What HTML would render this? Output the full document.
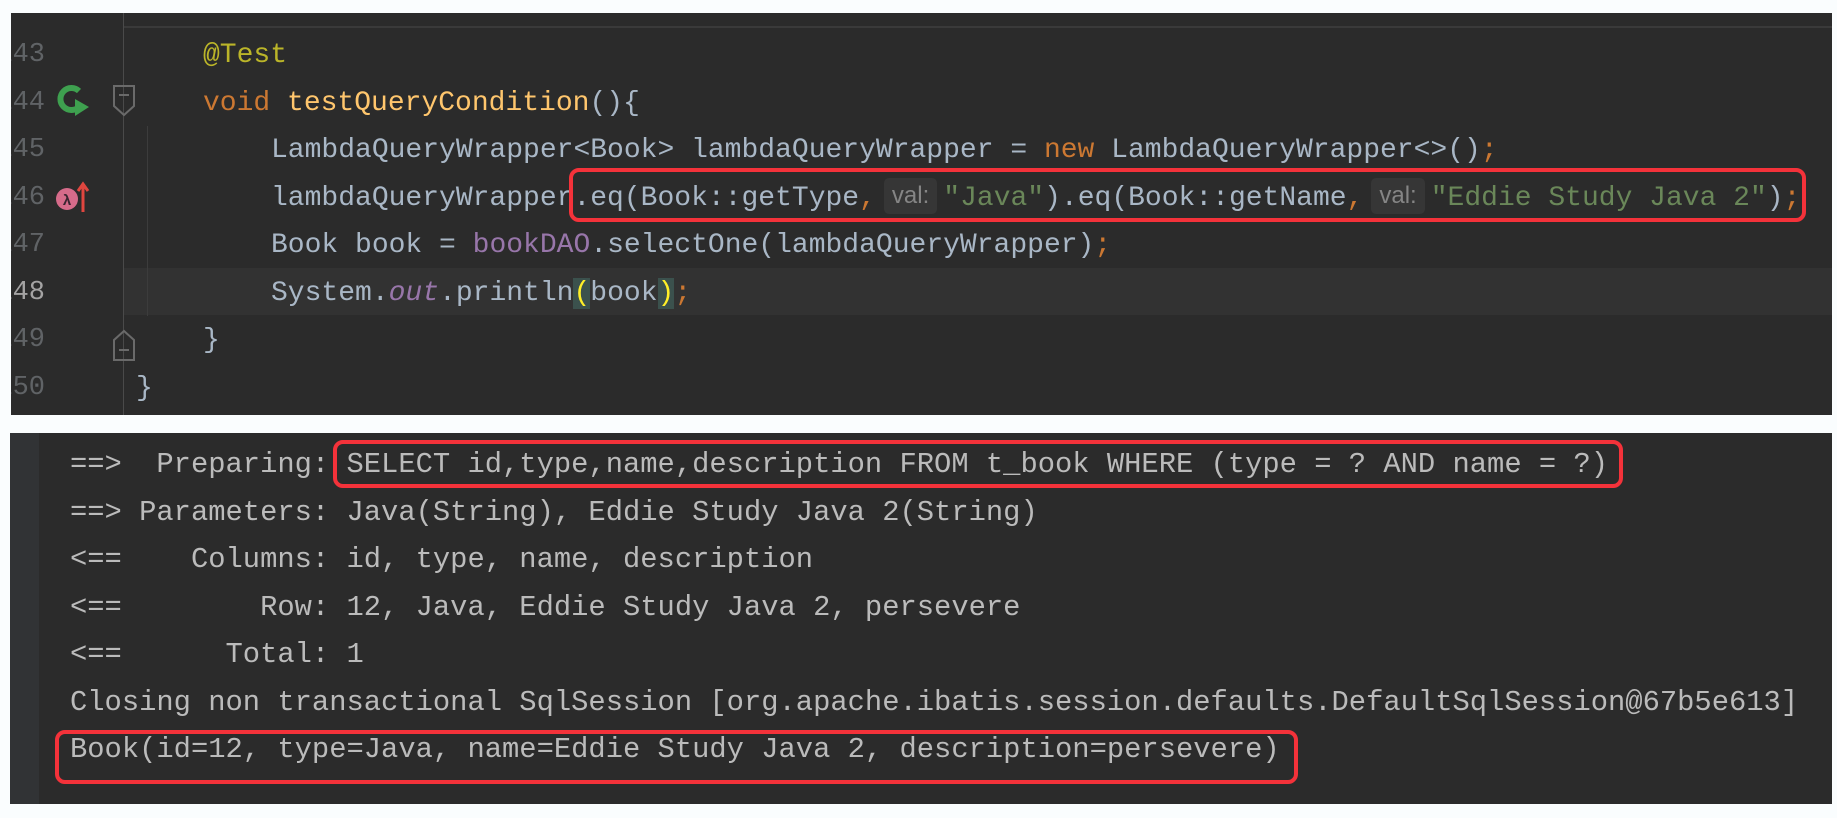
<!DOCTYPE html>
<html><head><meta charset="utf-8"><style>
body{margin:0;width:1837px;height:818px;background:#fafdfe;position:relative;overflow:hidden;font-family:"Liberation Mono",monospace}
.panel{position:absolute;background:#2b2b2b;overflow:hidden}
.ln{position:absolute;left:-26px;width:60px;text-align:right;color:#606366;font-size:27px;line-height:47.5px}
.code{position:absolute;left:0;white-space:pre;font-size:28px;line-height:47.5px;color:#a9b7c6}
.k{color:#cc7832}.m{color:#ffc66d}.a{color:#bbb529}.s{color:#6a8759}.f{color:#9876aa;font-style:italic}.p{color:#9876aa}
.hint{display:inline-block;font-family:"Liberation Sans",sans-serif;font-size:24px;color:#858585;background:#363636;border-radius:5px;padding:0 8px;line-height:36px;margin:0 6px 0 8px;vertical-align:2px}
.br{background:#3b514d;color:#ffef28}
.box{position:absolute;border:4px solid #f4323a;border-radius:10px;box-sizing:border-box}
.con{position:absolute;left:60px;white-space:pre;font-size:28.8px;line-height:47.5px;color:#bbbbbb}
</style></head><body>
<div class="panel" style="left:11px;top:13px;width:1821px;height:402px">
  <div style="position:absolute;left:112px;top:13px;right:0;height:2px;background:#3a3a3a"></div>
  <div style="position:absolute;left:112px;top:0;width:1px;height:402px;background:#4a4a4a"></div>
  <div style="position:absolute;left:113px;top:255px;right:0;height:47px;background:#323232"></div>
  <div style="position:absolute;left:136px;top:113px;width:1px;height:190px;background:#3c3c3c"></div>
  <div class="ln" style="top:19px">143</div>
  <div class="ln" style="top:66.5px">144</div>
  <div class="ln" style="top:114px">145</div>
  <div class="ln" style="top:161.5px">146</div>
  <div class="ln" style="top:209px">147</div>
  <div class="ln" style="top:256.5px;color:#a4a3a3">148</div>
  <div class="ln" style="top:304px">149</div>
  <div class="ln" style="top:351.5px">150</div>
  <svg style="position:absolute;left:46px;top:72px" width="34" height="32" viewBox="0 0 34 32">
    <path d="M22 6 A11 11 0 1 0 22 22" fill="none" stroke="#3ea04f" stroke-width="6"/>
    <path d="M8 14 l5 5 l9 -10" fill="none" stroke="#2b2b2b" stroke-width="3"/>
    <path d="M18 14 L32 22 L18 31 Z" fill="#3ea04f"/>
  </svg>
  <svg style="position:absolute;left:100px;top:71px" width="26" height="36" viewBox="0 0 26 36">
    <path d="M3 2 H23 V22 L13 31 L3 22 Z" fill="none" stroke="#6a6a6a" stroke-width="2"/>
    <path d="M8 11 H18" stroke="#6a6a6a" stroke-width="2"/>
  </svg>
  <svg style="position:absolute;left:100px;top:313px" width="26" height="36" viewBox="0 0 26 36">
    <path d="M3 34 H23 V14 L13 5 L3 14 Z" fill="none" stroke="#6a6a6a" stroke-width="2"/>
    <path d="M8 24 H18" stroke="#6a6a6a" stroke-width="2"/>
  </svg>
  <svg style="position:absolute;left:44px;top:168px" width="36" height="32" viewBox="0 0 36 32">
    <circle cx="12" cy="18" r="11" fill="#d66b8a"/>
    <text x="12" y="24" font-size="15" font-family="Liberation Sans" font-weight="bold" fill="#3a2530" text-anchor="middle">λ</text>
    <path d="M28 31 V4 M23 10 L28 3 L33 10" fill="none" stroke="#e0463f" stroke-width="3"/>
  </svg>
  <div class="code" style="top:19px;left:192px"><span class="a">@Test</span></div>
  <div class="code" style="top:66.5px;left:192px"><span class="k">void </span><span class="m">testQueryCondition</span>(){</div>
  <div class="code" style="top:114px;left:260px">LambdaQueryWrapper&lt;Book&gt; lambdaQueryWrapper = <span class="k">new </span>LambdaQueryWrapper&lt;&gt;()<span class="k">;</span></div>
  <div class="code" style="top:161.5px;left:260px">lambdaQueryWrapper.eq(Book::getType<span class="k">,</span><span class="hint">val:</span><span class="s">"Java"</span>).eq(Book::getName<span class="k">,</span><span class="hint">val:</span><span class="s">"Eddie Study Java 2"</span>)<span class="k">;</span></div>
  <div class="code" style="top:209px;left:260px">Book book = <span class="p">bookDAO</span>.selectOne(lambdaQueryWrapper)<span class="k">;</span></div>
  <div class="code" style="top:256.5px;left:260px">System.<span class="f">out</span>.println<span class="br">(</span>book<span class="br">)</span><span class="k">;</span></div>
  <div class="code" style="top:304px;left:192px">}</div>
  <div class="code" style="top:351.5px;left:125px">}</div>
</div>
<div class="box" style="left:569px;top:168px;width:1237px;height:54px"></div>

<div class="panel" style="left:10px;top:433px;width:1822px;height:371px">
  <div style="position:absolute;left:0;top:0;width:29px;height:371px;background:#313335"></div>
  <div class="con" style="top:8px">==&gt;  Preparing: SELECT id,type,name,description FROM t_book WHERE (type = ? AND name = ?)</div>
  <div class="con" style="top:55.5px">==&gt; Parameters: Java(String), Eddie Study Java 2(String)</div>
  <div class="con" style="top:103px">&lt;==    Columns: id, type, name, description</div>
  <div class="con" style="top:150.5px">&lt;==        Row: 12, Java, Eddie Study Java 2, persevere</div>
  <div class="con" style="top:198px">&lt;==      Total: 1</div>
  <div class="con" style="top:245.5px">Closing non transactional SqlSession [org.apache.ibatis.session.defaults.DefaultSqlSession@67b5e613]</div>
  <div class="con" style="top:293px">Book(id=12, type=Java, name=Eddie Study Java 2, description=persevere)</div>
</div>
<div class="box" style="left:333px;top:440px;width:1290px;height:48px"></div>
<div class="box" style="left:55px;top:730px;width:1243px;height:54px"></div>
</body></html>
